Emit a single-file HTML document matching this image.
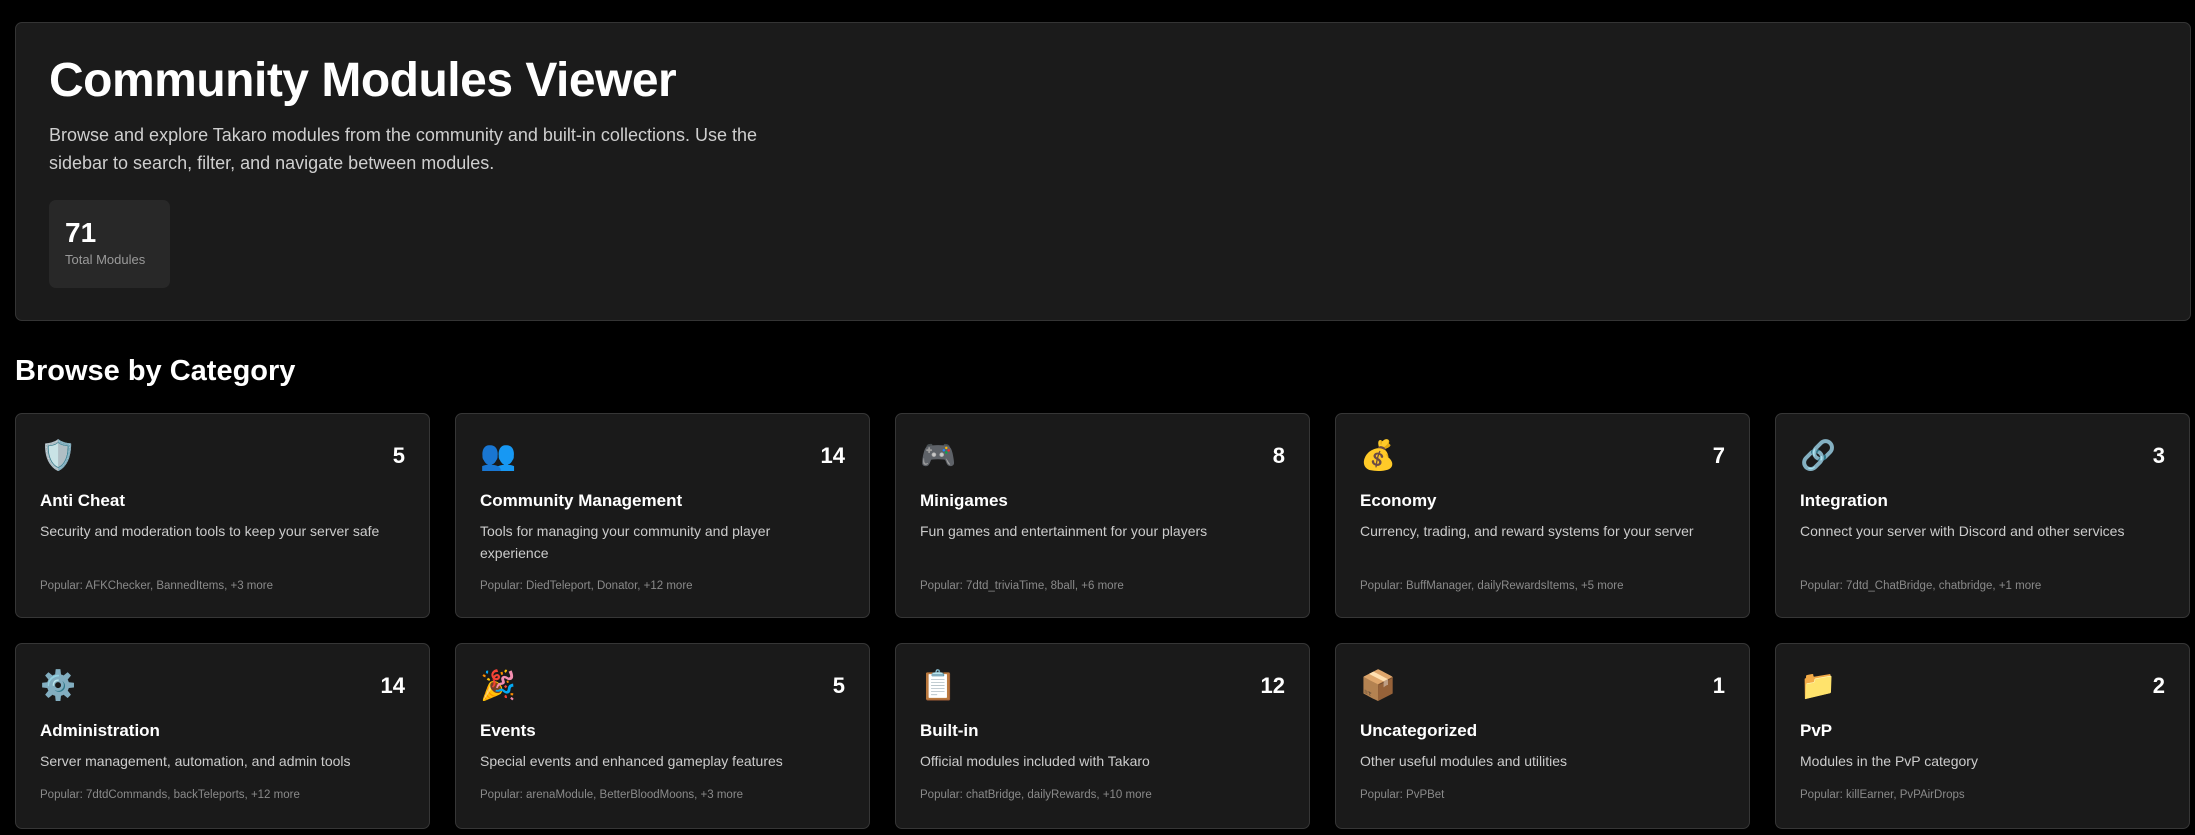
<!DOCTYPE html>
<html><head><meta charset="utf-8"><style>
*{box-sizing:border-box;margin:0;padding:0}
body{width:2195px;height:835px;overflow:hidden;background:#000;color:#fff;font-family:"Liberation Sans",sans-serif}
.hero{position:absolute;left:15px;top:22px;width:2176px;height:299px;background:#1b1b1b;border:1px solid #343434;border-radius:7px}
.hero h1{position:absolute;left:33px;top:30px;font-size:48px;font-weight:bold;letter-spacing:-0.5px}
.hero p{position:absolute;left:33px;top:98px;width:740px;font-size:18px;line-height:28px;color:#cfcfcf}
.stat{position:absolute;left:33px;top:177px;width:121px;height:88px;background:#282828;border-radius:7px;padding:16px 16px}
.stat b{display:block;font-size:28px;line-height:34px}
.stat span{display:block;font-size:13px;color:#9a9a9a;margin-top:2px}
h2{position:absolute;left:15px;top:355px;font-size:29px;font-weight:bold}
.card{position:absolute;width:415px;background:#1a1a1a;border:1px solid #363636;border-radius:7px;padding:24px}
.hd{height:36px;display:flex;justify-content:space-between;align-items:center}
.ic{font-size:29px;line-height:36px;font-family:"Noto Color Emoji","DejaVu Sans",sans-serif}
.n{font-size:22px;font-weight:bold}
.t{margin-top:16px;font-size:17px;font-weight:bold;line-height:22px}
.d{margin-top:8px;font-size:14px;line-height:22px;color:#cccccc;width:340px}
.p{margin-top:14px;font-size:11.5px;line-height:18px;color:#8a8a8a}
.r1 .p{position:absolute;left:24px;top:163px;margin:0}
</style></head><body>
<div class="hero">
<h1>Community Modules Viewer</h1>
<p>Browse and explore Takaro modules from the community and built-in collections. Use the sidebar to search, filter, and navigate between modules.</p>
<div class="stat"><b>71</b><span>Total Modules</span></div>
</div>
<h2>Browse by Category</h2>

<div class="card r1" style="left:15px;top:413px;height:205px"><div class="hd"><span class="ic">🛡️</span><span class="n">5</span></div><div class="t">Anti Cheat</div><div class="d">Security and moderation tools to keep your server safe</div><div class="p">Popular: AFKChecker, BannedItems, +3 more</div></div>
<div class="card r1" style="left:455px;top:413px;height:205px"><div class="hd"><span class="ic">👥</span><span class="n">14</span></div><div class="t">Community Management</div><div class="d">Tools for managing your community and player experience</div><div class="p">Popular: DiedTeleport, Donator, +12 more</div></div>
<div class="card r1" style="left:895px;top:413px;height:205px"><div class="hd"><span class="ic">🎮</span><span class="n">8</span></div><div class="t">Minigames</div><div class="d">Fun games and entertainment for your players</div><div class="p">Popular: 7dtd_triviaTime, 8ball, +6 more</div></div>
<div class="card r1" style="left:1335px;top:413px;height:205px"><div class="hd"><span class="ic">💰</span><span class="n">7</span></div><div class="t">Economy</div><div class="d">Currency, trading, and reward systems for your server</div><div class="p">Popular: BuffManager, dailyRewardsItems, +5 more</div></div>
<div class="card r1" style="left:1775px;top:413px;height:205px"><div class="hd"><span class="ic">🔗</span><span class="n">3</span></div><div class="t">Integration</div><div class="d">Connect your server with Discord and other services</div><div class="p">Popular: 7dtd_ChatBridge, chatbridge, +1 more</div></div>

<div class="card" style="left:15px;top:643px;height:186px"><div class="hd"><span class="ic">⚙️</span><span class="n">14</span></div><div class="t">Administration</div><div class="d">Server management, automation, and admin tools</div><div class="p">Popular: 7dtdCommands, backTeleports, +12 more</div></div>
<div class="card" style="left:455px;top:643px;height:186px"><div class="hd"><span class="ic">🎉</span><span class="n">5</span></div><div class="t">Events</div><div class="d">Special events and enhanced gameplay features</div><div class="p">Popular: arenaModule, BetterBloodMoons, +3 more</div></div>
<div class="card" style="left:895px;top:643px;height:186px"><div class="hd"><span class="ic">📋</span><span class="n">12</span></div><div class="t">Built-in</div><div class="d">Official modules included with Takaro</div><div class="p">Popular: chatBridge, dailyRewards, +10 more</div></div>
<div class="card" style="left:1335px;top:643px;height:186px"><div class="hd"><span class="ic">📦</span><span class="n">1</span></div><div class="t">Uncategorized</div><div class="d">Other useful modules and utilities</div><div class="p">Popular: PvPBet</div></div>
<div class="card" style="left:1775px;top:643px;height:186px"><div class="hd"><span class="ic">📁</span><span class="n">2</span></div><div class="t">PvP</div><div class="d">Modules in the PvP category</div><div class="p">Popular: killEarner, PvPAirDrops</div></div>
</body></html>
